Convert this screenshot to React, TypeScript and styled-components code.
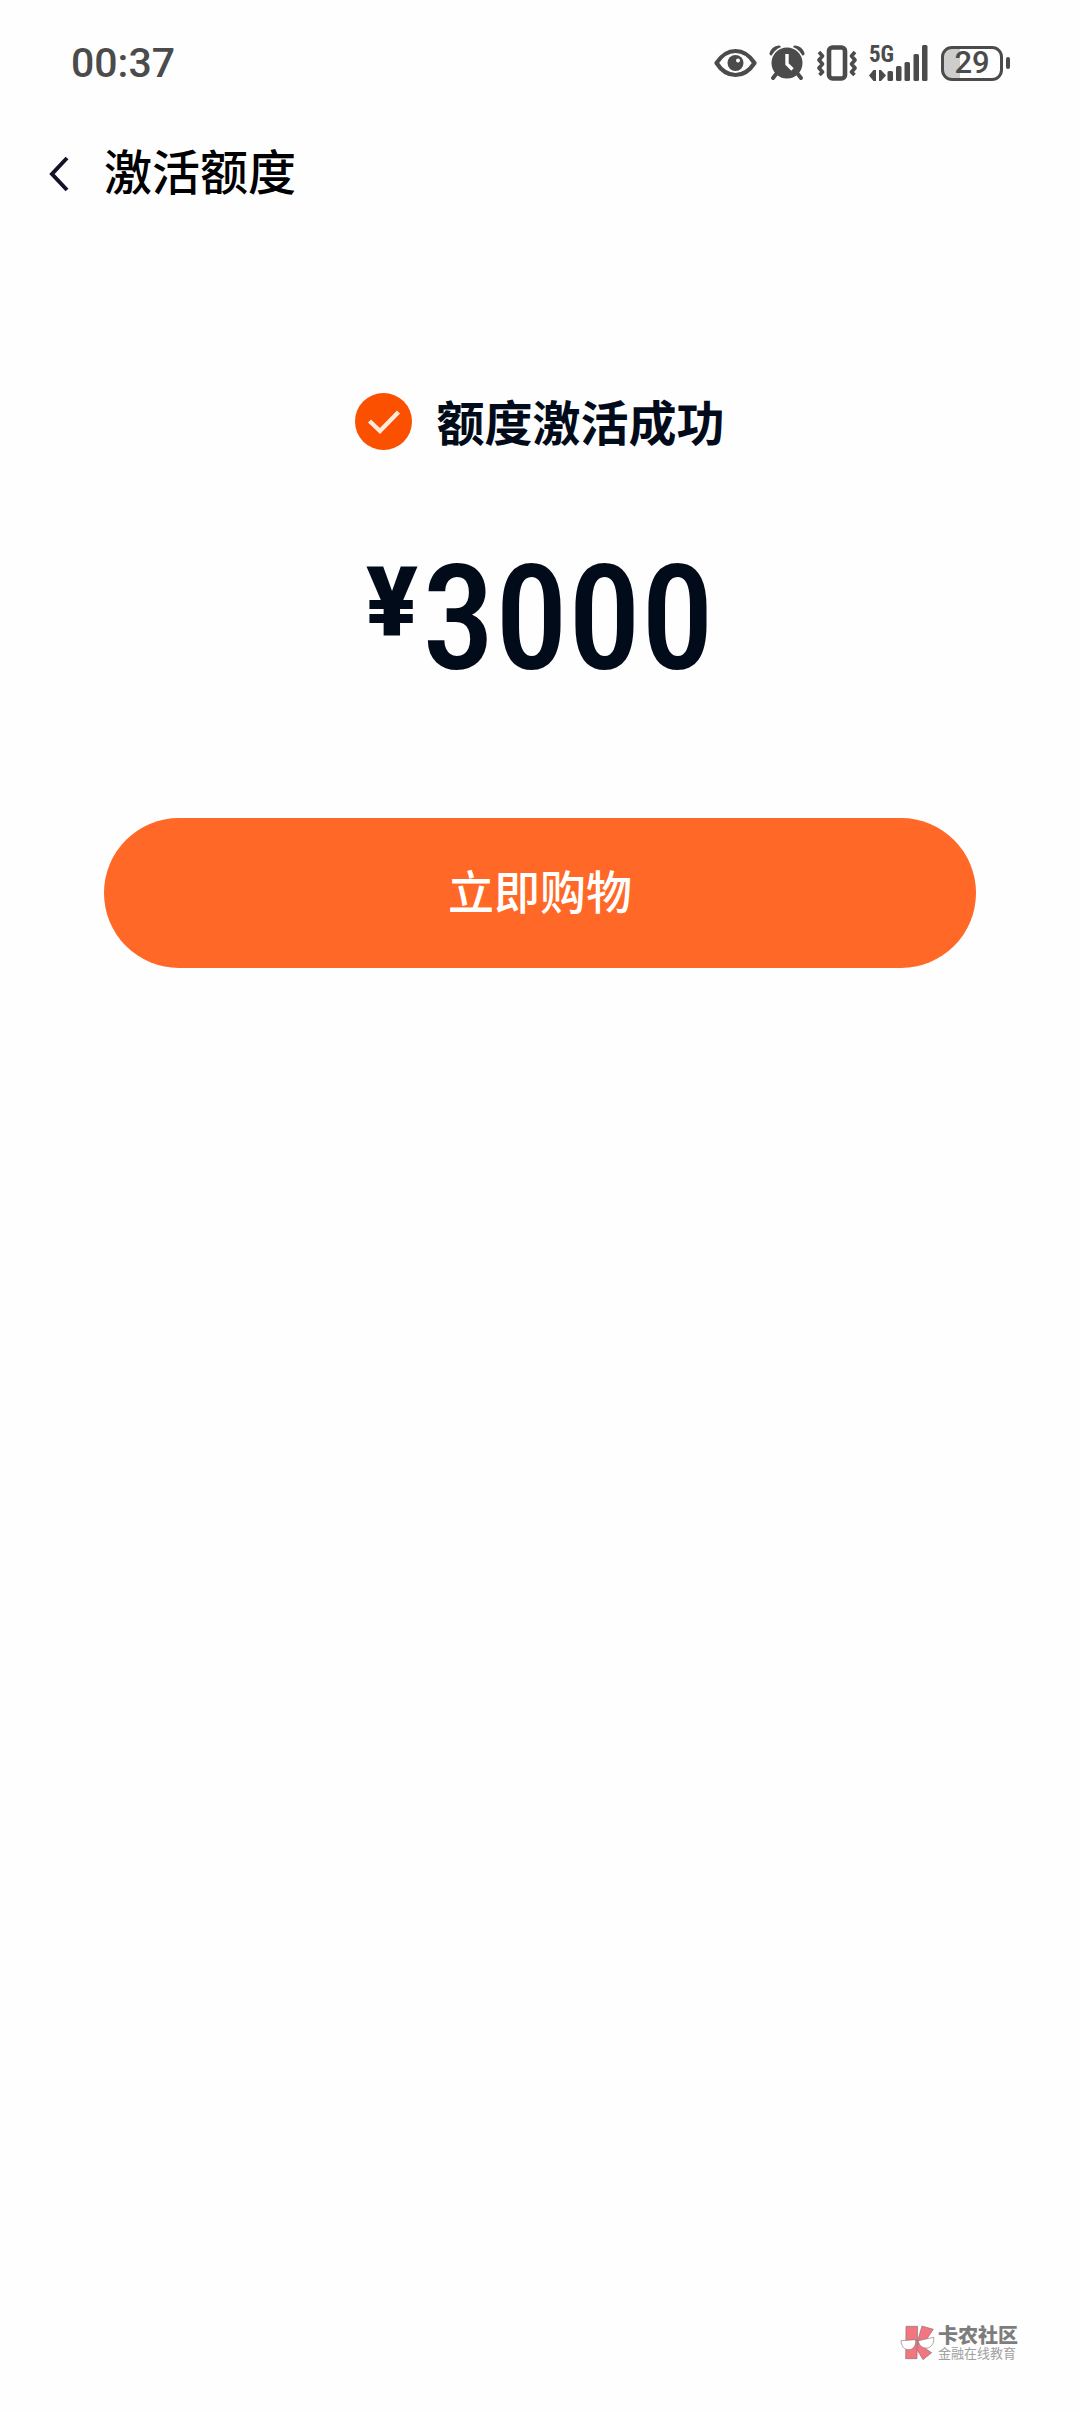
import React from "react";
import styled, { createGlobalStyle } from "styled-components";

const GlobalStyle = createGlobalStyle`
  *, *::before, *::after { box-sizing: border-box; }
  body {
    margin: 0;
    background: #fefefe;
    color: #020b1a;
    font-family: "Noto Sans CJK SC", "Noto Sans", sans-serif;
  }
  h1, h2, p { margin: 0; }
  svg { display: block; flex: none; }
`;

const Page = styled.div`
  min-height: 100vh;
  display: flex;
  flex-direction: column;
`;

const StatusBar = styled.div`
  height: 126px;
  padding: 0 70px 0 71px;
  display: flex;
  align-items: center;
  justify-content: space-between;
  color: #4b4b4b;
`;

const Clock = styled.time`
  font: 500 41px/48px Roboto, sans-serif;
`;

const StatusIcons = styled.div`
  display: flex;
  align-items: center;
  gap: 12px;
`;

const Signal = styled.div`
  height: 36px;
  display: flex;
  align-items: flex-end;
`;

const Network = styled.div`
  display: flex;
  flex-direction: column;
  align-items: flex-start;
  gap: 6px;
`;

const NetworkType = styled.span`
  height: 18px;
  margin-right: -8px;
  font: 700 23px/18px "Roboto Condensed", Roboto, sans-serif;
`;

const Battery = styled.div`
  display: flex;
  align-items: center;
  gap: 3px;
`;

const BatteryBody = styled.div`
  width: 62px;
  height: 35px;
  border: 3px solid #4b4b4b;
  border-radius: 11px;
  background: linear-gradient(to right, #cdcdcd 29%, transparent 29%);
  display: grid;
  place-items: center;
  font: 500 31px/28px Roboto, sans-serif;
`;

const BatteryTip = styled.div`
  width: 4px;
  height: 12px;
  border-radius: 2px;
  background: #4b4b4b;
`;

const Header = styled.header`
  height: 94px;
  padding: 0 45px;
  display: flex;
  align-items: center;
  gap: 31px;
  color: #000;
`;

const BackButton = styled.button`
  width: 28px;
  height: 48px;
  padding: 2px 0 0;
  border: 0;
  background: none;
  display: grid;
  place-items: center;
  cursor: pointer;
`;

const Title = styled.h1`
  padding-bottom: 8px;
  font-size: 48px;
  line-height: 64px;
  font-weight: 500;
`;

const Main = styled.main`
  padding: 168px 104px 0;
  display: flex;
  flex-direction: column;
  align-items: center;
`;

const Result = styled.div`
  display: flex;
  align-items: center;
  gap: 24px;
`;

const ResultText = styled.h2`
  padding-bottom: 2px;
  font-size: 48px;
  line-height: 64px;
  font-weight: 700;
`;

const Amount = styled.p`
  margin-top: 84px;
  height: 160px;
  display: flex;
  align-items: flex-start;
  gap: 4px;
  font: 500 146px/164px "Roboto Condensed", Roboto, sans-serif;
`;

const Currency = styled.span`
  padding-top: 8px;
  font: 900 96px/112px Roboto, sans-serif;
`;

const ShopButton = styled.button`
  margin-top: 120px;
  padding: 0 0 8px;
  width: 100%;
  height: 150px;
  border: 0;
  border-radius: 75px;
  background: #ff6826;
  color: #fff;
  font: 500 46px/64px "Noto Sans CJK SC", sans-serif;
  cursor: pointer;
`;

const Footer = styled.footer`
  margin-top: auto;
  padding: 0 62px 51px;
  display: flex;
  justify-content: flex-end;
  align-items: center;
  gap: 3px;
`;

const BrandText = styled.div`
  display: flex;
  flex-direction: column;
`;

const BrandName = styled.span`
  font-size: 20px;
  line-height: 20px;
  font-weight: 900;
  color: #7d7d7d;
`;

const BrandTag = styled.span`
  font-size: 13px;
  line-height: 16px;
  color: #a0a0a0;
`;

const EyeIcon = () => (
  <svg width="43" height="30" viewBox="0 0 43 30">
    <path
      d="M2.5 15C8 6.500 14 3 21.500 3S35 6.500 40.500 15C35 23.500 29 27 21.500 27S8 23.500 2.500 15Z"
      fill="none"
      stroke="#4b4b4b"
      strokeWidth="4.200"
      strokeLinejoin="round"
    />
    <circle cx="21.500" cy="15" r="8" fill="#4b4b4b" />
    <circle cx="24" cy="12.500" r="2" fill="#fefefe" />
  </svg>
);

const AlarmIcon = () => (
  <svg width="36" height="36" viewBox="0 0 36 36" fill="none" stroke="#4b4b4b">
    <path d="M2.500 8.500C3.500 5.500 6 3 10 2.500M33.500 8.500C32.500 5.500 30 3 26 2.500" strokeWidth="4" strokeLinecap="round" />
    <circle cx="18" cy="18" r="17" fill="#fefefe" stroke="none" />
    <path d="m8 28-4 5M28 28l4 5" strokeWidth="4" strokeLinecap="round" />
    <circle cx="18" cy="18" r="15.500" fill="#4b4b4b" stroke="none" />
    <path d="M18 9v10l5.500 5.500" stroke="#fefefe" strokeWidth="3.400" />
  </svg>
);

const VibrateIcon = () => (
  <svg width="40" height="36" viewBox="0 0 40 36" fill="none" stroke="#4b4b4b">
    <rect x="12" y="2.500" width="16" height="31" rx="3.500" strokeWidth="4.600" />
    <path
      d="m2 7 3.500 4L2 15l3.500 4L2 23l3.500 4L2.500 30M38 7l-3.500 4 3.500 4-3.500 4 3.500 4-3.500 4 3 3"
      strokeWidth="3.600"
      strokeLinejoin="round"
    />
  </svg>
);

const TrafficIcon = () => (
  <svg width="18" height="11" viewBox="0 0 18 11" fill="#4b4b4b">
    <path d="M0 5.500 4.500 0H7v11H4.500ZM10 0h2l5 5.500L12 11h-2Z" />
  </svg>
);

const BarsIcon = () => (
  <svg width="42" height="36" viewBox="0 0 42 36" fill="#4b4b4b">
    <rect x="0.500" y="26" width="5.500" height="10" rx="1.500" />
    <rect x="9" y="21" width="5.500" height="15" rx="1.500" />
    <rect x="17.500" y="17" width="5.500" height="19" rx="1.500" />
    <rect x="26.500" y="9" width="5.500" height="27" rx="1.500" />
    <rect x="35" y="0" width="5.500" height="36" rx="1.500" />
  </svg>
);

const SuccessIcon = () => (
  <svg width="57" height="57" viewBox="0 0 57 57">
    <circle cx="28.500" cy="28.500" r="28.500" fill="#fa5000" />
    <path d="m14.500 28 10.500 10 18.500-19" fill="none" stroke="#ffeadb" strokeWidth="4.400" />
  </svg>
);

const BrandLogo = () => (
  <svg width="35" height="37" viewBox="15 26 105 111" stroke="#8b7478" strokeWidth="2">
    <path d="M33 33h35l-2 97H32Z" fill="#f27580" />
    <path d="m69 72 12-40 34 10-19 28-26 15 40 27-26 21-18-30Z" fill="#f27580" />
    <path d="m18 76 44-3c2 18-8 30-21 30S19 93 18 76ZM70 76l46-10c2 18-7 31-20 32S72 91 70 76Z" fill="#fff" />
    <path d="M62 76q4-4 8 0" fill="none" />
  </svg>
);

export default function App() {
  return (
    <>
      <GlobalStyle />
      <Page>
        <StatusBar>
          <Clock>00:37</Clock>
          <StatusIcons>
            <EyeIcon />
            <AlarmIcon />
            <VibrateIcon />
            <Signal>
              <Network>
                <NetworkType>5G</NetworkType>
                <TrafficIcon />
              </Network>
              <BarsIcon />
            </Signal>
            <Battery>
              <BatteryBody>29</BatteryBody>
              <BatteryTip />
            </Battery>
          </StatusIcons>
        </StatusBar>
        <Header>
          <BackButton type="button" aria-label="返回">
            <svg width="22" height="38" viewBox="0 0 22 38" fill="none" stroke="#15112b" strokeWidth="4">
              <path d="M19 3 4 19l15 16" />
            </svg>
          </BackButton>
          <Title>激活额度</Title>
        </Header>
        <Main>
          <Result>
            <SuccessIcon />
            <ResultText>额度激活成功</ResultText>
          </Result>
          <Amount>
            <Currency>¥</Currency>
            <span>3000</span>
          </Amount>
          <ShopButton type="button">立即购物</ShopButton>
        </Main>
        <Footer>
          <BrandLogo />
          <BrandText>
            <BrandName>卡农社区</BrandName>
            <BrandTag>金融在线教育</BrandTag>
          </BrandText>
        </Footer>
      </Page>
    </>
  );
}
